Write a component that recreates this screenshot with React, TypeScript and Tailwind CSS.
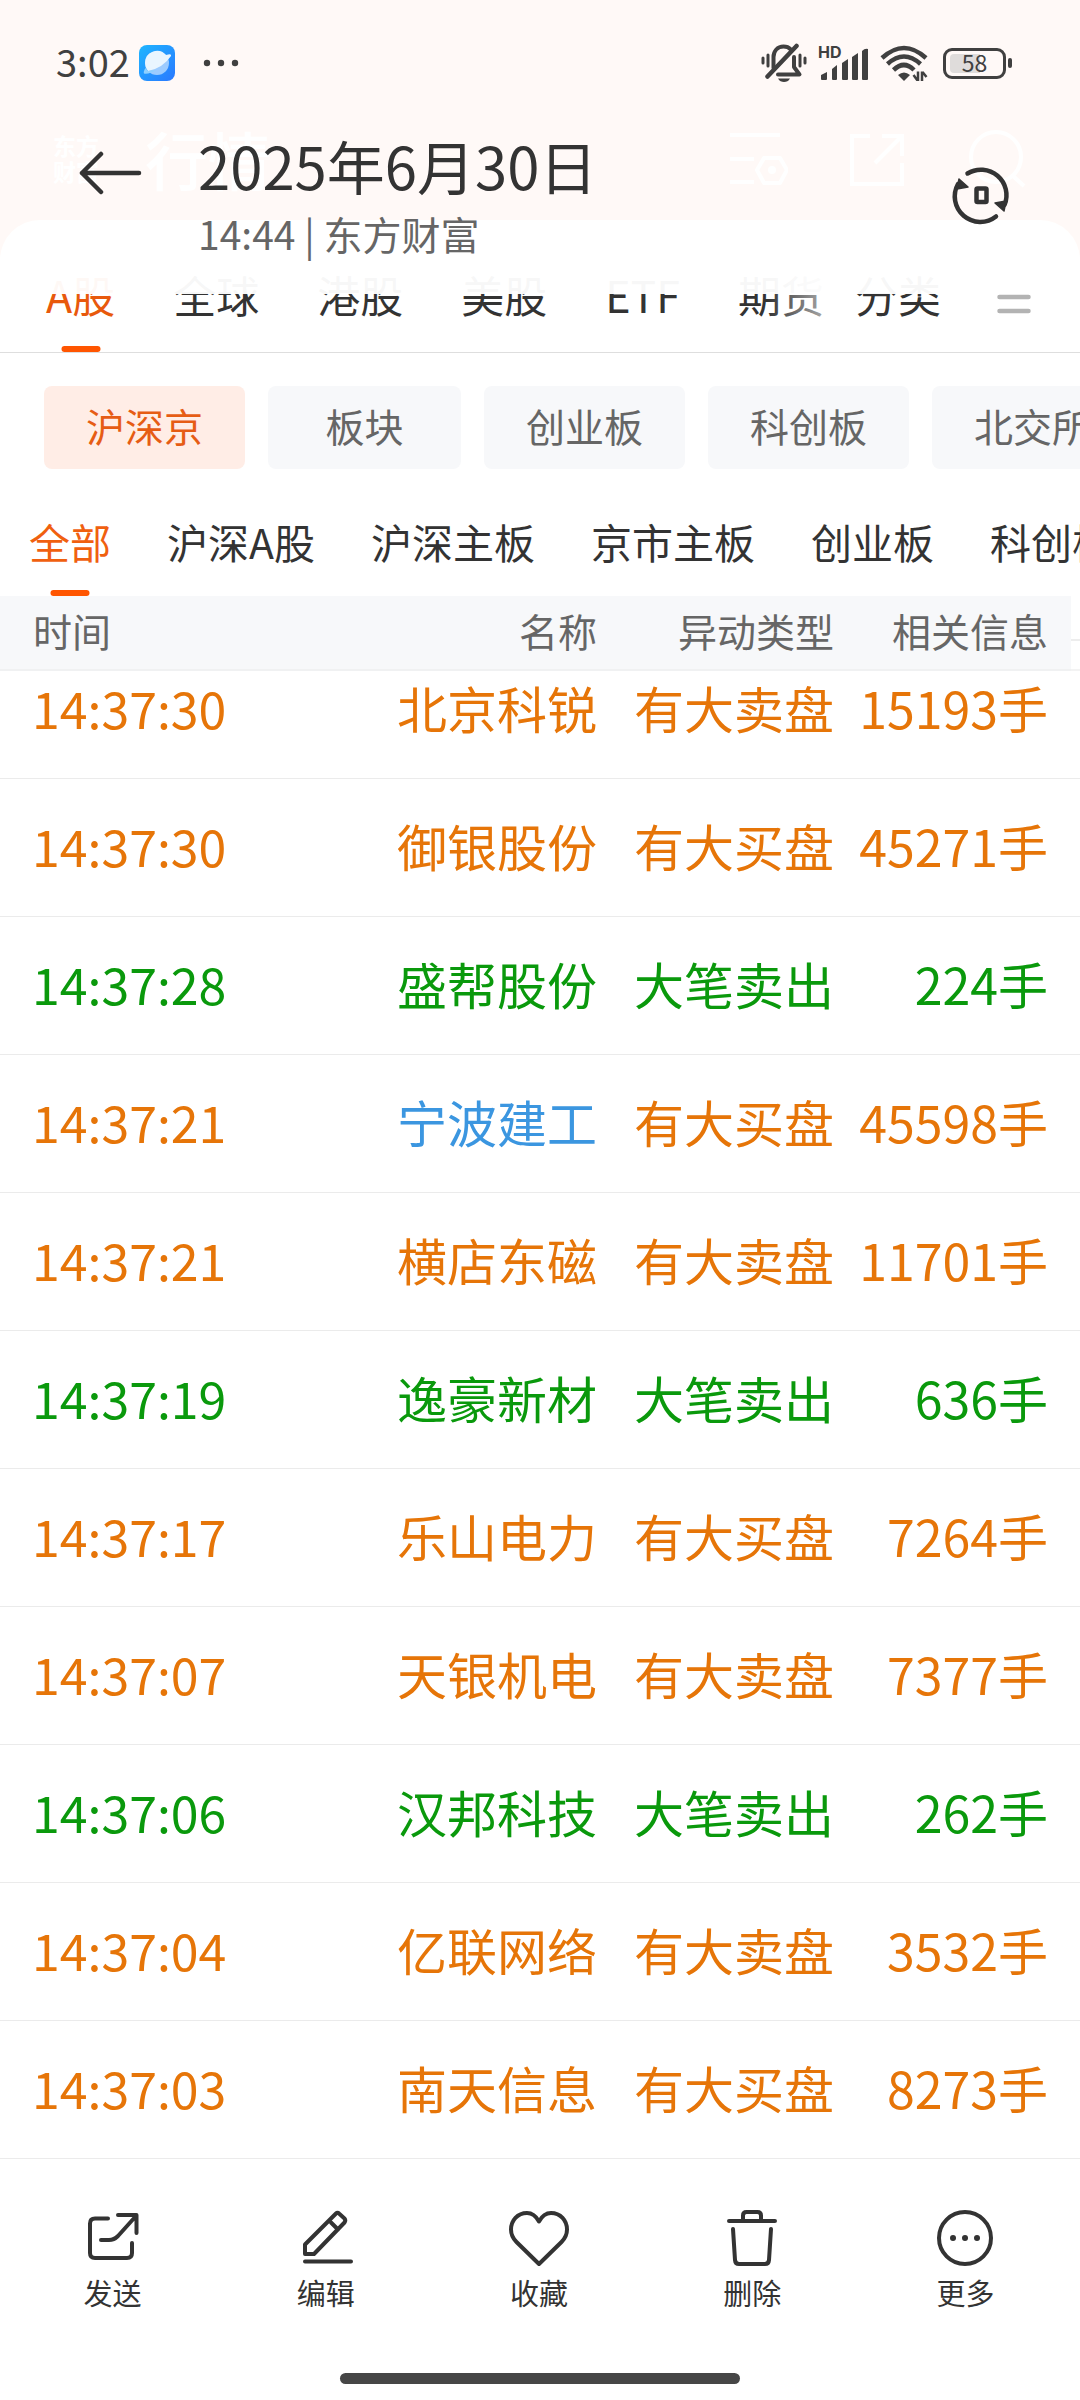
import { clsx } from "clsx";

const markets = ["A股", "全球", "港股", "美股", "ETF", "期货"];
const chips = ["沪深京", "板块", "创业板", "科创板", "北交所"];
const boards = ["全部", "沪深A股", "沪深主板", "京市主板", "创业板", "科创板"];

type Tone = "orange" | "green" | "blue";

const toneClass: Record<Tone, string> = {
  orange: "text-[#e67508]",
  green: "text-[#0a990c]",
  blue: "text-[#3b96e0]",
};

const rows: {
  time: string;
  name: string;
  type: string;
  info: string;
  tone: Tone;
  nameTone?: Tone;
}[] = [
  { time: "14:37:30", name: "北京科锐", type: "有大卖盘", info: "15193手", tone: "orange" },
  { time: "14:37:30", name: "御银股份", type: "有大买盘", info: "45271手", tone: "orange" },
  { time: "14:37:28", name: "盛帮股份", type: "大笔卖出", info: "224手", tone: "green" },
  { time: "14:37:21", name: "宁波建工", type: "有大买盘", info: "45598手", tone: "orange", nameTone: "blue" },
  { time: "14:37:21", name: "横店东磁", type: "有大卖盘", info: "11701手", tone: "orange" },
  { time: "14:37:19", name: "逸豪新材", type: "大笔卖出", info: "636手", tone: "green" },
  { time: "14:37:17", name: "乐山电力", type: "有大买盘", info: "7264手", tone: "orange" },
  { time: "14:37:07", name: "天银机电", type: "有大卖盘", info: "7377手", tone: "orange" },
  { time: "14:37:06", name: "汉邦科技", type: "大笔卖出", info: "262手", tone: "green" },
  { time: "14:37:04", name: "亿联网络", type: "有大卖盘", info: "3532手", tone: "orange" },
  { time: "14:37:03", name: "南天信息", type: "有大买盘", info: "8273手", tone: "orange" },
];

function StatusBar() {
  return (
    <div className="flex h-[126px] items-center pl-[56px] pr-[68px] text-[#404040]">
      <span className="pb-1 text-[38px] leading-[40px]">3:02</span>
      <svg className="ml-[9px] size-9" viewBox="0 0 36 36">
        <defs>
          <linearGradient id="tile" x1="0" y1="0" x2="1" y2="1">
            <stop offset="0" stopColor="#1fb6ff" />
            <stop offset="1" stopColor="#2a78ff" />
          </linearGradient>
        </defs>
        <rect width="36" height="36" rx="8" fill="url(#tile)" />
        <circle cx="18" cy="18" r="12" fill="#9ccbff" />
        <path d="M6 18A12 12 0 0 1 27 10Q33 8 32 11Q24 23 9 26A12 12 0 0 1 6 18Z" fill="#e9f5ff" />
        <path d="M6.500 23Q4 27 5 28.500Q10 29.500 17 25L9 26Z" fill="#8fd0ff" />
      </svg>
      <svg className="ml-[28px] h-2 w-9" viewBox="0 0 36 8" fill="currentColor">
        <circle cx="4" cy="4" r="3.200" />
        <circle cx="18" cy="4" r="3.200" />
        <circle cx="32" cy="4" r="3.200" />
      </svg>

      {/* Bell off */}
      <svg className="ml-auto h-10 w-[46px]" viewBox="0 0 46 40" fill="none" stroke="currentColor" strokeLinecap="round">
        <path d="M2 15v5M7 12v11M39 12v11M44 15v5" strokeWidth="3" />
        <path d="M12.500 25V14c0-6 4-10.500 10-10.500 3 0 5.500 1 7.200 2.800" strokeWidth="4" />
        <path d="M6.500 33.500L35.500 3" strokeWidth="4.500" />
        <path d="M33 14v10l5.500 7.500H17" strokeWidth="4" strokeLinejoin="round" />
        <path d="M17 35.500h12c-1.500 2.600-3.500 3.500-6 3.500s-4.500-.9-6-3.500z" fill="currentColor" stroke="none" />
      </svg>
      {/* Signal */}
      <div className="relative ml-[11px] h-9 w-[52px]">
        <span className="absolute left-0 top-0 font-[Inter,sans-serif] text-[16px] font-bold leading-[14px]">HD</span>
        <svg className="size-full" viewBox="0 0 52 36" fill="currentColor">
          <path d="M3 30l6-3v7a1 1 0 0 1-1 1H4a1 1 0 0 1-1-1zM14 24l5-4v14a1 1 0 0 1-1 1h-3a1 1 0 0 1-1-1zM24 18l6-4v20a1 1 0 0 1-1 1h-4a1 1 0 0 1-1-1zM34 12l6-4v26a1 1 0 0 1-1 1h-4a1 1 0 0 1-1-1zM44 6q3-3 6-2v30a1 1 0 0 1-1 1h-4a1 1 0 0 1-1-1z" />
        </svg>
      </div>
      {/* Wifi */}
      <svg className="ml-[10px] h-9 w-[48px]" viewBox="0 0 48 36" fill="none" stroke="currentColor" strokeWidth="4.500">
        <path d="M2 13Q24-7 46 13" />
        <path d="M7.500 19Q24 4 40.500 19" />
        <path d="M13.500 25Q24 15 34 25" />
        <path d="M18 30q6-5 12 0l-6 6z" fill="currentColor" stroke="none" />
        <path d="M38 26.500V36M33.500 30l4 5.500M42 36v-9.500M46.500 32L42.500 27" strokeWidth="2.500" />
      </svg>
      {/* Battery */}
      <div className="ml-[15px] flex items-center gap-[2px]">
        <div className="relative flex h-[31px] w-[63px] items-center justify-center rounded-[9px] border-[3px] border-current">
          <span className="absolute inset-y-[3px] left-1 w-[30px] rounded-l-[4px] bg-[#dfdcdb]" />
          <span className="relative pb-[2px] text-[23px] leading-[24px]">58</span>
        </div>
        <span className="h-[10px] w-1 rounded-full bg-current" />
      </div>
    </div>
  );
}

/* Note header that floats over the captured app page */
function NoteHeader() {
  return (
    <header className="absolute inset-x-0 top-0 z-20 h-[294px] bg-white/96 text-[#333]">
      <StatusBar />
      <div className="flex items-start pl-[79px] pr-[69px]">
        <button type="button" aria-label="返回" className="mt-[24px]">
          <svg className="h-[46px] w-[64px]" viewBox="0 0 64 46" fill="none" stroke="currentColor" strokeWidth="4.500" strokeLinecap="round" strokeLinejoin="round">
            <path d="M22 4L3 23l19 19M3 23h57" />
          </svg>
        </button>
        <div className="ml-[55px] flex-1">
          <h1 className="mt-[3px] text-[58px] leading-[72px]">2025年6月30日</h1>
          <p className="mt-[8px] text-[39px] leading-[48px] text-[#666]">14:44 | 东方财富</p>
        </div>
        <button type="button" aria-label="切换" className="mt-[39px]">
          <svg className="size-[60px]" viewBox="0 0 60 60" fill="none" stroke="currentColor" strokeWidth="4.500" strokeLinecap="round">
            <path d="M16.500 8.500A25.500 25.500 0 0 1 53.500 40" />
            <path d="M45 51.500A25.500 25.500 0 0 1 7 19" />
            <path d="M8 14l9 8-11 2zM53 46l-9-8 11-2z" fill="currentColor" strokeWidth="1.500" strokeLinejoin="round" />
            <rect x="25.500" y="23.500" width="10" height="13.500" rx="1" />
          </svg>
        </button>
      </div>
    </header>
  );
}

function QuoteHeader() {
  return (
    <div className="flex h-[220px] items-start pl-[53px] pr-[52px] pt-[126px] text-white">
      <span className="w-[46px] pt-[6px] text-[23px] font-bold leading-[26px]">东方财富</span>
      <span className="ml-[46px] text-[63px] font-medium leading-[64px]">行情</span>
      <svg className="ml-auto mt-[3px] size-[60px]" viewBox="0 0 60 60" fill="none" stroke="currentColor" strokeWidth="4">
        <path d="M2 6h50M2 30h24M2 53h24" />
        <path d="M36 29h16l7 12-7 13H36l-7-13z" strokeLinejoin="round" />
        <circle cx="44" cy="41" r="2" />
      </svg>
      <svg className="ml-[60px] mt-[3px] size-[60px]" viewBox="0 0 60 60" fill="none" stroke="currentColor" strokeWidth="4">
        <path d="M22 7H4v48h50V34M34 7h20v20M54 7L27 34" />
      </svg>
      <svg className="ml-[60px] mt-[3px] size-[60px]" viewBox="0 0 60 60" fill="none" stroke="currentColor" strokeWidth="4">
        <circle cx="28" cy="28" r="25" />
        <path d="M44 46l12 11" />
      </svg>
    </div>
  );
}

function MarketTabs() {
  return (
    <nav className="flex h-[133px] items-stretch rounded-t-[40px] border-b border-[#dedede] bg-white text-[43px] text-[#333]">
      <div className="relative min-w-0 flex-1 overflow-hidden">
        <div className="flex h-full gap-[58px] pl-[46px]">
          {markets.map((m, i) => (
            <button
              key={m}
              type="button"
              className={clsx(
                "relative shrink-0 whitespace-nowrap pt-[16px]",
                i === 0 && "text-[#e8590c]"
              )}
            >
              {m}
              {i === 0 && (
                <span className="absolute bottom-0 left-1/2 h-[6px] w-[39px] -translate-x-1/2 rounded-full bg-[#ff5500]" />
              )}
            </button>
          ))}
        </div>
        <span className="absolute inset-y-0 right-0 w-[60px] bg-linear-to-l from-white/60 to-transparent" />
      </div>
      <button type="button" className="ml-[28px] shrink-0 pt-[16px]">
        分类
      </button>
      <button type="button" aria-label="菜单" className="ml-[56px] mr-[49px] pt-[36px]">
        <svg className="h-5 w-[34px]" viewBox="0 0 34 20" stroke="#b3b3b3" strokeWidth="4.500" strokeLinecap="round">
          <path d="M2.500 3h29M2.500 17h29" />
        </svg>
      </button>
    </nav>
  );
}

function EventTable() {
  return (
    <table className="w-full table-fixed border-separate border-spacing-0 whitespace-nowrap">
      <colgroup>
        <col />
        <col className="w-[230px]" />
        <col className="w-[237px]" />
        <col className="w-[237px]" />
        <col className="w-[9px]" />
      </colgroup>
      <thead className="text-[39px] leading-[48px] text-[#666] [&_th]:border-b-2 [&_th]:border-[#f0f1f2] [&_th]:bg-[#f7f8fa] [&_th]:pb-[5px] [&_th]:font-normal">
        <tr className="h-[75px]">
          <th className="pl-[33px] text-left">时间</th>
          <th className="text-right">名称</th>
          <th className="text-right">异动类型</th>
          <th className="pr-[23px] text-right">相关信息</th>
          <td className="border-b-2 border-[#f3f3f3] pt-[14px]">
            <div className="h-[2px] bg-[#ededed]" />
          </td>
        </tr>
      </thead>
      <tbody className="text-[50px] leading-[60px]">
        {rows.map((row, i) => (
          <tr
            key={i}
            className={clsx(
              toneClass[row.tone],
              "[&>td]:border-b [&>td]:border-[#ebebeb]",
              i === 0 ? "h-[108px] [&>td]:pb-[36px]" : "h-[138px] [&>td]:pb-[6px]"
            )}
          >
            <td className="pl-[32px] text-left">{row.time}</td>
            <td className={clsx("text-right", row.nameTone && toneClass[row.nameTone])}>{row.name}</td>
            <td className="text-right">{row.type}</td>
            <td className="pr-[23px] text-right">{row.info}</td>
            <td />
          </tr>
        ))}
      </tbody>
    </table>
  );
}

const actions = [
  {
    label: "发送",
    icon: (
      <path d="M27 12.500H14q-5 0-5 5V47q0 5 5 5h32q5 0 5-5V37M37 9h18.500v18M55 10L37 30q-4 4-9 4h-8" />
    ),
  },
  {
    label: "编辑",
    icon: (
      <path d="M11 48V38.500L42 7.500q1.500-1.500 3 0l5.500 5q1.500 2 0 4L20 48zM37 16.500l7 7M11 55.500h46" />
    ),
  },
  {
    label: "收藏",
    icon: (
      <path d="M32 15.500C29 10 24.500 7 20 7C10.500 7 4 14.500 4 23.500c0 5 2 9 5.500 12.500L32 58l22.500-22C58 32.500 60 28.500 60 23.500C60 14.500 53.500 7 44 7c-4.500 0-9 3-12 8.500z" />
    ),
  },
  {
    label: "删除",
    icon: (
      <path d="M9 15h46M23 15V9.500Q23 6 26.500 6h11Q41 6 41 9.500V15M13 23l2 31q.3 4 4 4h26q3.700 0 4-4l2-31" />
    ),
  },
  {
    label: "更多",
    icon: (
      <>
        <circle cx="32" cy="32" r="26" />
        <path d="M20 32h.01M32 32h.01M44 32h.01" strokeWidth="6" />
      </>
    ),
  },
];

function BottomBar() {
  return (
    <footer className="bg-white text-[#333]">
      <div className="flex pl-[6px] pr-[8px] pt-[47px]">
        {actions.map((a) => (
          <button key={a.label} type="button" className="flex flex-1 flex-col items-center">
            <svg className="size-16" viewBox="0 0 64 64" fill="none" stroke="currentColor" strokeWidth="4" strokeLinecap="round" strokeLinejoin="round">
              {a.icon}
            </svg>
            <span className="mt-px text-[29px] leading-[42px]">{a.label}</span>
          </button>
        ))}
      </div>
      <div className="mx-auto mb-4 mt-[60px] h-[11px] w-[37%] rounded-full bg-[#464646]" />
    </footer>
  );
}

export default function App() {
  return (
    <div className="relative overflow-hidden bg-white font-['Noto_Sans_CJK_SC',sans-serif]">
      <NoteHeader />

      <main>
        <div className="bg-[#ff6a30]">
          <QuoteHeader />
          <MarketTabs />
        </div>

        {/* Sector chips */}
        <div className="flex gap-[23px] overflow-hidden pl-[44px] pt-[33px] text-[39px]">
          {chips.map((c, i) => (
            <button
              key={c}
              type="button"
              className={clsx(
                "h-[83px] min-w-[193px] shrink-0 rounded-lg px-[42px] pb-[4px]",
                i === 0 ? "bg-[#ffede6] text-[#e65c14]" : "bg-[#f7f8fa] text-[#666]"
              )}
            >
              {c}
            </button>
          ))}
        </div>

        {/* Board tabs */}
        <div className="flex h-[127px] gap-[56px] overflow-hidden pl-[29px] text-[41px] text-[#333]">
          {boards.map((b, i) => (
            <button
              key={b}
              type="button"
              className={clsx("relative shrink-0 whitespace-nowrap pt-[18px]", i === 0 && "text-[#f0600f]")}
            >
              {b}
              {i === 0 && (
                <span className="absolute bottom-0 left-1/2 h-[6px] w-[39px] -translate-x-1/2 rounded-full bg-[#ff5500]" />
              )}
            </button>
          ))}
        </div>

        <EventTable />
      </main>

      <BottomBar />
    </div>
  );
}
